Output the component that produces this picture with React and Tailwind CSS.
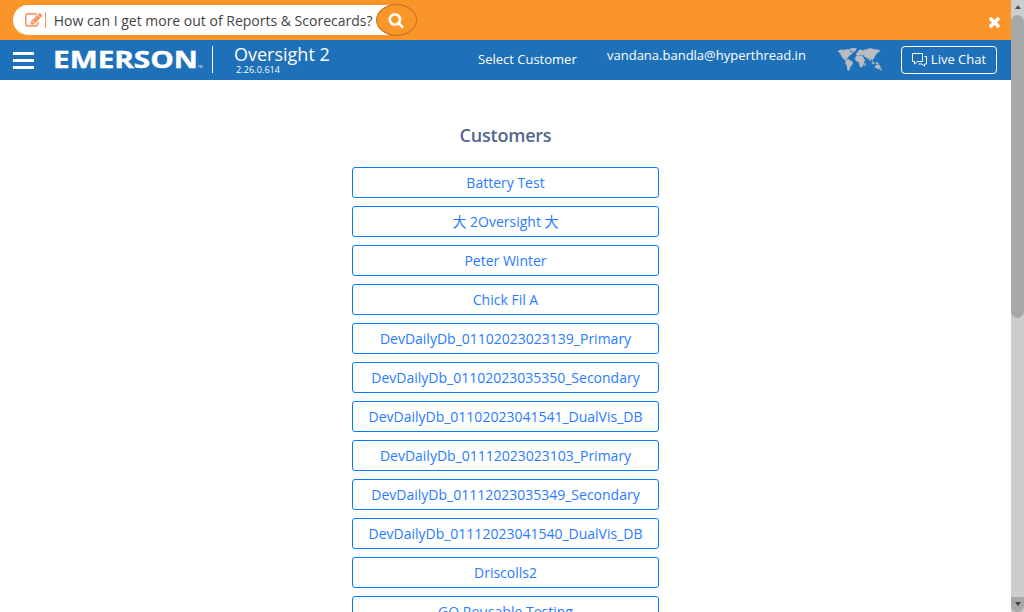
import React from "react";

const customers = [
  "Battery Test",
  "大 2Oversight 大",
  "Peter Winter",
  "Chick Fil A",
  "DevDailyDb_01102023023139_Primary",
  "DevDailyDb_01102023035350_Secondary",
  "DevDailyDb_01102023041541_DualVis_DB",
  "DevDailyDb_01112023023103_Primary",
  "DevDailyDb_01112023035349_Secondary",
  "DevDailyDb_01112023041540_DualVis_DB",
  "Driscolls2",
  "GO Reusable Testing",
];

function EditIcon() {
  return (
    <svg viewBox="0 0 1792 1792" className="h-[17px] w-[17px] shrink-0 fill-[#f98f5e] stroke-[#f98f5e]" strokeWidth="50">
      <path d="M888 1184l116-116-152-152-116 116v56h96v96h56zm440-720q-16-16-33 1l-350 350q-17 17-1 33t33-1l350-350q17-17 1-33zm80 594v190q0 119-84.5 203.5t-203.5 84.5h-832q-119 0-203.5-84.5t-84.5-203.5v-832q0-119 84.5-203.5t203.5-84.5h832q63 0 117 25 15 7 18 23 3 17-9 29l-49 49q-14 14-32 8-23-6-45-6h-832q-66 0-113 47t-47 113v832q0 66 47 113t113 47h832q66 0 113-47t47-113v-126q0-13 9-22l64-64q15-15 35-7t20 29zm-96-738l288 288-672 672h-288v-288zm444 132l-92 92-288-288 92-92q28-28 68-28t68 28l152 152q28 28 28 68t-28 68z" />
    </svg>
  );
}

function SearchIcon() {
  return (
    <svg viewBox="0 0 1792 1792" className="h-4 w-4 fill-white stroke-white" strokeWidth="50">
      <path d="M1216 832q0-185-131.5-316.5t-316.5-131.5-316.5 131.5-131.5 316.5 131.5 316.5 316.5 131.5 316.5-131.5 131.5-316.5zm512 832q0 52-38 90t-90 38q-54 0-90-38l-343-342q-179 124-399 124-143 0-273.5-55.5t-225-150-150-225-55.5-273.5 55.5-273.5 150-225 225-150 273.5-55.5 273.5 55.5 225 150 150 225 55.5 273.5q0 220-124 399l343 343q37 37 37 90z" />
    </svg>
  );
}

function CloseIcon() {
  return (
    <svg viewBox="110 366 1188 1188" className="h-[11px] w-[11px] fill-white">
      <path d="M1298 1322q0 40-28 68l-136 136q-28 28-68 28t-68-28l-294-294-294 294q-28 28-68 28t-68-28l-136-136q-28-28-28-68t28-68l294-294-294-294q-28-28-28-68t28-68l136-136q28-28 68-28t68 28l294 294 294-294q28-28 68-28t68 28l136 136q28 28 28 68t-28 68l-294 294 294 294q28 28 28 68z" />
    </svg>
  );
}

function WorldIcon() {
  return (
    <svg viewBox="0 0 46 24" className="h-6 w-[46px] shrink-0 fill-[#b9bcc0] stroke-[#b9bcc0]" strokeWidth="0.7">
      <path d="M1 3.500L3 2l4 .3L10 1.600l3 .4-.3 1.800 1.600.2 1 1.600-2.400 1.200L11.200 8.600l-.6 1.600-2-.2.6 1.800 1.600.6-.6.500-2.200-1L5.500 9.600 4 6.500 3.200 4.600z" />
      <path d="M12.500 1.200L16 .300l3.300.300-.8 2L16 4.300l-1.200-1.700z" />
      <path d="M9.500 12l2.300-.3 3.200 2 .6 1.300-1.200 2.400-1.500 1.500-1 3.500-1.200-.3-.5-4.200-1.700-3z" />
      <path d="M19 6.200l1.200-1.400 1.600-2.300L24 1.800l1 1.200 2-.8 3-.7L33 .400l4 1.100 5.300.8.4 1-1.500.4-.8 1.700-1-.9-.6 2.400-1.600 1.300.2 1.700-1.400.5-.6 2-1.300-1.600-1.300 2-1.200-2.600-1.400.3-1.300-1.800-1.800-.2.600-1.200-2.200-.4-1.100.6-1.300-1.100-1.700 1.300z" />
      <path d="M19.300 8.300l2-.9 2.500.7 1.800.2 1.200 3 1.200.6-1.200 2.200-.2 2-1.500 2.700-1.600.3-1.200-2.900-.3-2.800-2.500-.4-1.500-2.200z" />
      <path d="M28 15.200l.7.300-.5 2-.7-.4zM35 13.700l2.300 1.300-.3 1-2-1zM39 14.200l2.200 1-.2.800-1.800-.5zM38.200 18.500l1.500-1.700 1.400.4.800-.5 1.300 2-.3 1.800-1.600.5-1.400-1.300-1.600.2zM44 20.500l.8.600-1.200 1.100-.5-.3z" />
    </svg>
  );
}

function ChatIcon() {
  return (
    <svg viewBox="0 0 15 14" className="h-[14px] w-[15px] shrink-0" fill="none" stroke="white" strokeWidth="1">
      <path d="M.5.5h10v8H5.300L2.500 11V8.500h-2z" />
      <path d="M12.500 3.500h2v7.500h-2v2.300L9.800 11H6.500" />
    </svg>
  );
}

function Logo() {
  return (
    <svg viewBox="0 0 150 40" className="h-10 w-[150px] shrink-0 fill-white font-['Open_Sans',sans-serif]">
      <text x="-1" y="27.700" fontSize="23" fontWeight="700" stroke="white" strokeWidth="0.4" textLength="145" lengthAdjust="spacingAndGlyphs">EMERSON</text>
      <text x="144" y="27.500" fontSize="3">TM</text>
    </svg>
  );
}

function Scrollbar() {
  return (
    <div className="flex h-full w-[13px] shrink-0 flex-col justify-between bg-[#cdcdcd]">
      <div className="flex flex-col">
        <div className="flex h-[15px] items-center justify-center rounded-t-md bg-[#cdcdcd]">
          <svg viewBox="0 0 6 4" className="mb-[2px] h-1 w-[6px] fill-[#505050]"><path d="M3 0l3 4H0z" /></svg>
        </div>
        <div className="h-[303px] rounded-full bg-[#a8a8a8]" />
      </div>
      <div className="flex h-[15px] items-center justify-center rounded-b-md bg-[#a8a8a8]">
        <svg viewBox="0 0 6 4" className="mb-[2px] h-1 w-[6px] fill-[#404040]"><path d="M0 0h6L3 4z" /></svg>
      </div>
    </div>
  );
}

export default function App() {
  return (
    <div className="flex h-[612px] w-[1024px] overflow-hidden bg-white font-['Open_Sans','Noto_Sans_CJK_SC',sans-serif]">
      <div className="flex min-w-0 flex-1 flex-col">
        <div className="flex h-10 shrink-0 items-center justify-between bg-[#f99529] pr-[11px] pl-[13px]">
          <div className="flex h-8 items-center">
            <div className="flex h-[30px] w-[383px] items-center rounded-l-full bg-white pl-[11.500px]">
              <EditIcon />
              <div className="ml-[3.500px] h-4 w-px bg-[#f99c5a]" />
              <span className="ml-[7.700px] text-[14px] whitespace-nowrap text-[#444]">How can I get more out of Reports &amp; Scorecards?</span>
            </div>
            <button className="-ml-5 flex h-8 w-[41px] items-center justify-center rounded-[50%] border border-[#bd7428] bg-[#f99529] pr-[2px]">
              <SearchIcon />
            </button>
          </div>
          <button className="mt-[5px]"><CloseIcon /></button>
        </div>
        <header className="flex h-10 shrink-0 items-center bg-[#1e70b9] pr-[14px] pl-[13px] text-white">
          <div className="flex w-[21px] flex-col gap-[4px]">
            <div className="h-[3px] bg-white" />
            <div className="h-[3px] bg-white" />
            <div className="h-[3px] bg-white" />
          </div>
          <div className="ml-5"><Logo /></div>
          <div className="mb-[1px] ml-2 h-[27px] w-px bg-white" />
          <div className="mb-px ml-[21px] flex w-[244px] flex-col">
            <span className="h-[20px] text-[18px] leading-[21px]">Oversight 2</span>
            <span className="ml-[2px] text-[9px] leading-[11px] font-medium tracking-[0.1px]">2.26.0.614</span>
          </div>
          <span className="w-[129px] text-[13px] whitespace-nowrap">Select Customer</span>
          <span className="mb-2 w-[230px] text-[13px] whitespace-nowrap">vandana.bandla@hyperthread.in</span>
          <WorldIcon />
          <button className="ml-auto flex h-7 w-24 shrink-0 items-center justify-center gap-1 rounded border border-white text-[13px]">
            <ChatIcon />
            Live Chat
          </button>
        </header>
        <main className="flex min-h-0 flex-1 flex-col items-center overflow-hidden">
          <h1 className="mt-[43px] mb-[19px] text-[18px] leading-[25px] font-semibold tracking-[-0.220px] text-[#53668f]">Customers</h1>
          <div className="flex w-[307px] flex-col gap-2">
            {customers.map((name) => (
              <button key={name} className="flex h-[31px] shrink-0 items-center justify-center rounded-[3px] border border-[#007bff] text-[14px] leading-5 whitespace-nowrap text-[#287cff]">
                {name}
              </button>
            ))}
          </div>
        </main>
      </div>
      <Scrollbar />
    </div>
  );
}
